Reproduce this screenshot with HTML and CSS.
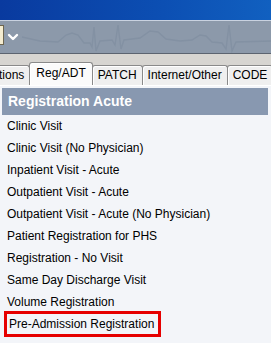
FILE: index.html
```html
<!DOCTYPE html>
<html lang="en">
<head>
    <meta charset="UTF-8">
    <title>Registration</title>
    <link rel="stylesheet" href="styles.css">
</head>
<body>
    <div class="titlebar"></div>
    <div class="toolbar">
        <div class="tool-icon"></div>
        <svg class="chevron" width="12" height="8" viewBox="0 0 12 8">
            <path d="M2 2 L6 6 L10 2" fill="none" stroke="#fff" stroke-width="2.4" stroke-linecap="round" stroke-linejoin="round"/>
        </svg>
        <svg class="ecg" width="271" height="32" viewBox="0 0 271 32">
            <polyline points="22,16 40,20 58,21 66,14 72,12 78,14 84,22 90,22 92,26 94,6 96,30 100,20 112,19 115,24 118,4 121,28 124,19 140,17 150,10 158,11 166,18 180,20 192,19 200,14 206,15 212,21 222,22 226,28 229,4 232,30 236,21 271,20" fill="none" stroke="#8391a3" stroke-width="1.4"/>
        </svg>
    </div>
    <div class="tabzone">
        <div class="tabs">
            <div class="tab first">tions</div>
            <div class="tab active">Reg/ADT</div>
            <div class="tab">PATCH</div>
            <div class="tab">Internet/Other</div>
            <div class="tab">CODE</div>
        </div>
    </div>
    <div class="panel">
        <div class="section-head">Registration Acute</div>
        <ul class="items">
            <li>Clinic Visit</li>
            <li>Clinic Visit (No Physician)</li>
            <li>Inpatient Visit - Acute</li>
            <li>Outpatient Visit - Acute</li>
            <li>Outpatient Visit - Acute (No Physician)</li>
            <li>Patient Registration for PHS</li>
            <li>Registration - No Visit</li>
            <li>Same Day Discharge Visit</li>
            <li>Volume Registration</li>
            <li class="marked"><span>Pre-Admission Registration</span></li>
        </ul>
    </div>
</body>
</html>
```

FILE: styles.css
```css
body {
    margin: 0;
    width: 271px;
    height: 343px;
    overflow: hidden;
    font-family: "Liberation Sans", Arial, sans-serif;
    font-size: 12px;
    color: #000;
    background: #f3f5f9;
}
.titlebar {
    height: 20px;
    background: linear-gradient(to right, #093a9f, #0c4fb3 60%, #1160c0);
    border-bottom: 1px solid #c9d2e0;
}
.toolbar {
    position: relative;
    height: 32px;
    background: #8c99aa;
    border-bottom: 1px solid #5c6470;
    overflow: hidden;
}
.tool-icon {
    position: absolute;
    left: -8px;
    top: 4px;
    width: 10px;
    height: 18px;
    background: #f4ecd0;
    border: 1px solid #6d6650;
}
.chevron {
    position: absolute;
    left: 7px;
    top: 12px;
    z-index: 1;
}
.ecg {
    position: absolute;
    left: 0;
    top: 0;
}
.tabzone {
    height: 31px;
    background: #d7d5d1;
    display: flex;
    align-items: flex-end;
    border-bottom: 1px solid #fff;
}
.tabs {
    display: flex;
    align-items: flex-end;
    height: 100%;
    width: 100%;
}
.tab {
    height: 19px;
    line-height: 19px;
    padding: 0 5px;
    background: #efefef;
    border: 1px solid #8a8a8a;
    border-bottom: none;
    border-radius: 3px 3px 0 0;
    box-shadow: inset 1px 1px 0 #fff;
    white-space: nowrap;
    margin-right: -1px;
}
.tab.first {
    margin-left: -4px;
    padding-left: 2px;
}
.tab.active {
    height: 22px;
    line-height: 20px;
    padding: 0 6px;
    background: #fbfbfb;
    position: relative;
    z-index: 1;
}
.panel {
    padding: 2px 3px 0 2px;
}
.section-head {
    height: 27px;
    line-height: 27px;
    padding-left: 6px;
    background: #8898b0;
    color: #fff;
    font-weight: bold;
    font-size: 14px;
}
.items {
    list-style: none;
    margin: 0;
    padding: 0;
}
.items li {
    height: 22px;
    line-height: 22px;
    padding-left: 5px;
}
.items li.marked span {
    display: inline-block;
    line-height: 20px;
    padding: 0 4px 0 2px;
    outline: 3px solid #e60000;
}
```
